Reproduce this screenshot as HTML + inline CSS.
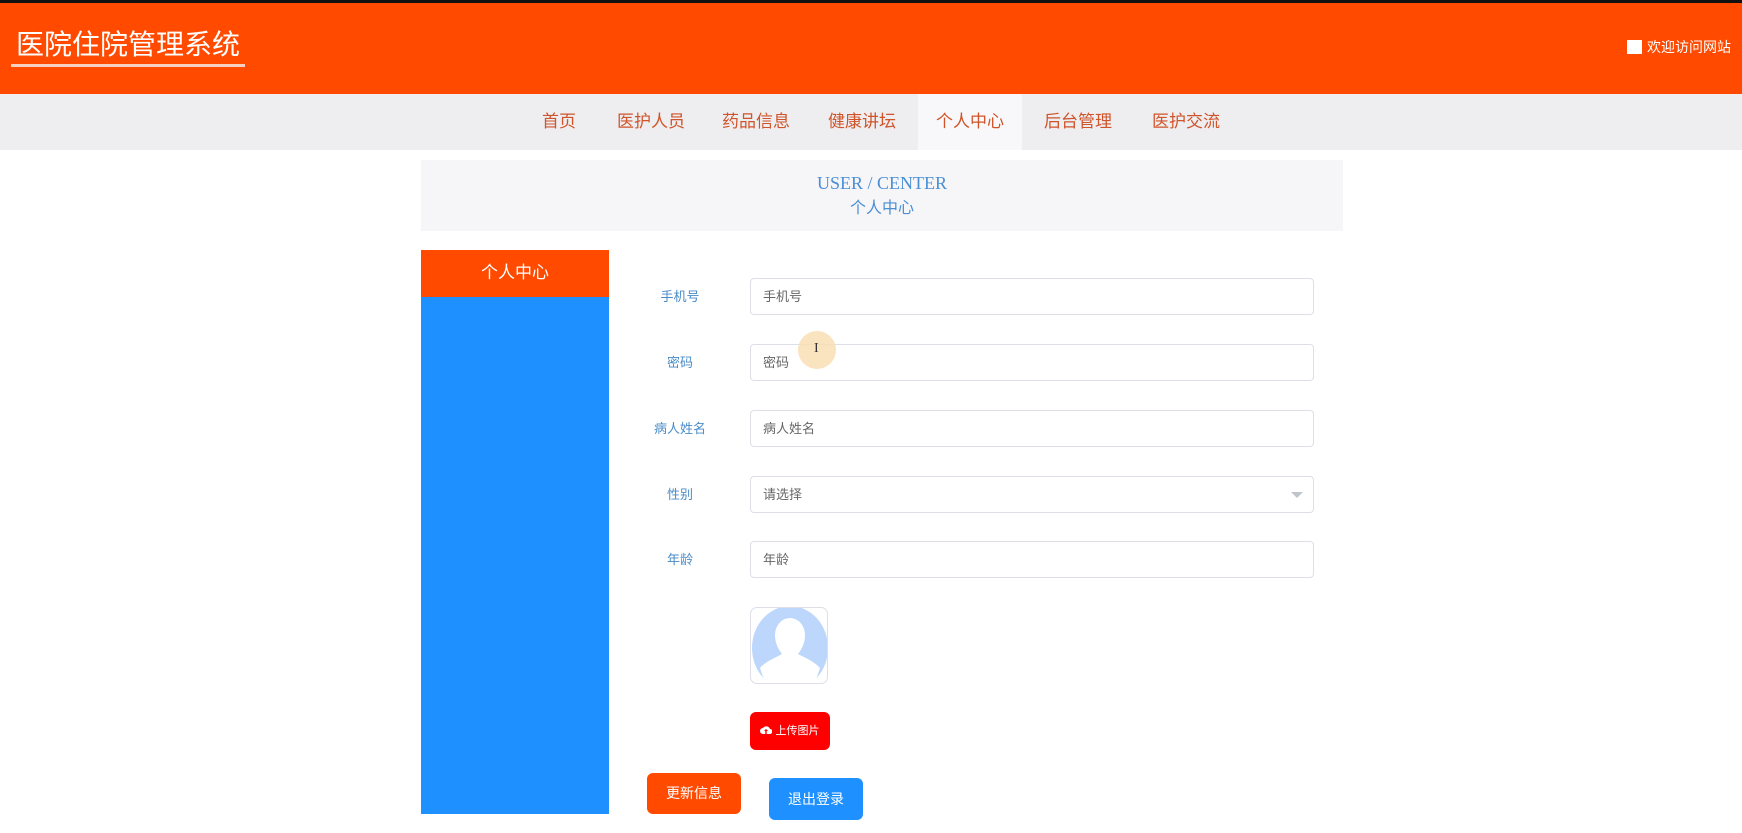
<!DOCTYPE html>
<html><head><meta charset="utf-8"><style>
*{margin:0;padding:0;box-sizing:border-box}
body{width:1742px;height:833px;background:#fff;font-family:"Liberation Sans","Noto Sans CJK SC",sans-serif;position:relative;overflow:hidden}
.a{position:absolute}
.top{left:0;top:0;width:1742px;height:3px;background:#111}
.hd{left:0;top:3px;width:1742px;height:91px;background:#ff4a00}
.title{left:16px;top:27px;font-size:28px;color:#fff;line-height:36px;white-space:nowrap}
.ul{left:11px;top:64px;width:234px;height:3px;background:#f6d0c0}
.wel{left:1627px;top:38px;font-size:14px;color:#fff;line-height:18px;white-space:nowrap}
.wel i{display:inline-block;width:15px;height:14px;background:#fff;vertical-align:-2px;margin-right:5px}
.nav{left:0;top:94px;width:1742px;height:56px;background:#eeeef0}
.ni{top:94px;height:56px;line-height:56px;font-size:17px;color:#d0542a;text-align:center;white-space:nowrap}
.act{background:#f8f8fa}
.tb{left:421px;top:160px;width:922px;height:71px;background:#f6f5f8;text-align:center;color:#4a8fd6}
.side{left:421px;top:250px;width:188px;height:564px;background:#1e90ff}
.sh{left:421px;top:250px;width:188px;height:47px;background:#ff4a00;color:#fff;font-size:17px;text-align:center;line-height:45px}
.lb{width:100px;left:630px;text-align:center;font-size:13px;color:#4a8cc8;line-height:37px}
.in{left:750px;width:564px;height:37px;border:1px solid #dcdfe6;border-radius:4px;font-size:13px;color:#666;line-height:35px;padding-left:12px}
.btn{color:#fff;font-size:14px;text-align:center;border-radius:6px}
</style></head><body>
<div class="a top"></div>
<div class="a hd"></div>
<div class="a title">医院住院管理系统</div>
<div class="a ul"></div>
<div class="a wel"><i></i>欢迎访问网站</div>
<div class="a nav"></div>
<div class="a ni" style="left:525px;width:68px">首页</div>
<div class="a ni" style="left:616px;width:70px">医护人员</div>
<div class="a ni" style="left:721px;width:70px">药品信息</div>
<div class="a ni" style="left:827px;width:70px">健康讲坛</div>
<div class="a ni act" style="left:918px;width:104px">个人中心</div>
<div class="a ni" style="left:1043px;width:70px">后台管理</div>
<div class="a ni" style="left:1151px;width:70px">医护交流</div>
<div class="a tb"><div style="font-family:'Liberation Serif',serif;font-size:18px;margin-top:12px;line-height:22px">USER / CENTER</div><div style="font-size:16px;line-height:24px;margin-top:3px">个人中心</div></div>
<div class="a side"></div>
<div class="a sh">个人中心</div>
<div class="a lb" style="top:278px">手机号</div><div class="a in" style="top:278px">手机号</div>
<div class="a lb" style="top:344px">密码</div><div class="a in" style="top:344px">密码</div>
<div class="a lb" style="top:410px">病人姓名</div><div class="a in" style="top:410px">病人姓名</div>
<div class="a lb" style="top:476px">性别</div><div class="a in" style="top:476px">请选择<span style="position:absolute;right:10px;top:15px;width:0;height:0;border-left:6px solid transparent;border-right:6px solid transparent;border-top:6px solid #c0c4cc"></span></div>
<div class="a lb" style="top:541px">年龄</div><div class="a in" style="top:541px">年龄</div>
<div class="a" style="left:798px;top:331px;width:38px;height:38px;border-radius:50%;background:#f9deb4;opacity:.85"></div>
<div class="a" style="left:814px;top:341px;font-size:14px;color:#333;font-family:'Liberation Serif',serif">I</div>
<div class="a" style="left:750px;top:607px;width:78px;height:77px;border:1px solid #dcdfe6;border-radius:7px;overflow:hidden;background:#fff">
<svg width="78" height="77" viewBox="0 0 78 77"><ellipse cx="39" cy="40" rx="38" ry="42" fill="#bcd7fb"/><path d="M24 27a15 17 0 0 1 30 0c0 9-4 15-7 19 5 3 16 7 22 14l-6 18H15l-6-18c6-7 17-11 22-14-3-4-7-10-7-19z" fill="#fff"/></svg></div>
<div class="a btn" style="left:750px;top:712px;width:80px;height:38px;background:#f00;font-size:11px;line-height:38px"><svg width="12" height="10" viewBox="0 0 12 10" style="vertical-align:-1px"><path d="M3 9a3 3 0 0 1 0-6 4 4 0 0 1 7 1 2.5 2.5 0 0 1 0 5z" fill="#fff"/><path d="M6 4l-2 2h1.3v3h1.4V6H8z" fill="#f00"/></svg> 上传图片</div>
<div class="a btn" style="left:647px;top:773px;width:94px;height:41px;background:#ff4a00;line-height:41px">更新信息</div>
<div class="a btn" style="left:769px;top:778px;width:94px;height:42px;background:#1e90ff;line-height:42px">退出登录</div>
</body></html>
